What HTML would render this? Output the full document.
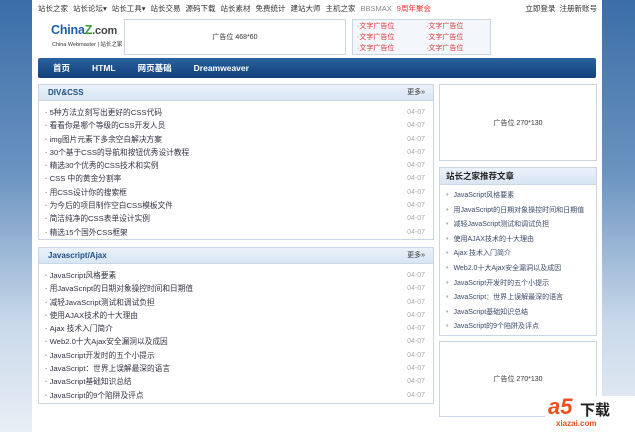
<!DOCTYPE html>
<html><head><meta charset="utf-8"><style>
*{margin:0;padding:0;box-sizing:border-box}
body{width:635px;height:432px;overflow:hidden;font-family:"Liberation Sans","Noto Sans CJK SC",sans-serif;font-size:8px;color:#333;position:relative;
background:linear-gradient(180deg,#3b6ea8 0%,#6a93c0 40%,#c9d9ea 75%,#e8eef5 100%)}
.page{position:absolute;left:32px;top:0;width:570px;height:432px;background:#fff}
.abs{position:absolute}
.top{left:38px;top:3px;font-size:7.5px;color:#333;white-space:nowrap}
.top span{margin-right:5px}
.box{border:1px solid #c9d6e3;background:#fff}
.nav{left:38px;top:58px;width:558px;height:20px;background:linear-gradient(#2a62a0,#123f78);border-radius:2px;color:#fff;font-weight:bold;font-size:8.5px;line-height:20px;padding-left:15px}
.nav span{margin-right:22px}
.hd{height:16px;background:linear-gradient(#eaf1fa,#d8e5f3);border-bottom:1px solid #c9d6e3;font-weight:bold;color:#1f4f86;font-size:8px;line-height:16px;padding-left:9px;position:relative}
.hd i{position:absolute;right:8px;font-style:normal;font-weight:normal;color:#333;font-size:7px}
ul{list-style:none;padding:5px 8px 0 6px}
li{height:13.3px;line-height:13.3px;font-size:7.7px;color:#334;position:relative;white-space:nowrap}
li:before{content:"·";color:#888;margin-right:2px;font-weight:bold}
li b{position:absolute;right:0;font-weight:normal;color:#aaa;font-size:7px}
.r li{height:14.6px;line-height:14.6px;font-size:7px;color:#3a4a6a}
.r li:before{content:"•";color:#aab;margin-right:5px}
.ad{font-size:7px;color:#333;text-align:center}
.red{color:#d33;font-size:7px;line-height:11px}
</style></head><body>
<div class="page"></div>
<div class="abs top"><span>站长之家</span><span>站长论坛▾</span><span>站长工具▾</span><span>站长交易</span><span>源码下载</span><span>站长素材</span><span>免费统计</span><span>建站大师</span><span>主机之家</span><span style="color:#888">BBSMAX</span><span style="color:#e33">9周年聚会</span></div>
<div class="abs top" style="left:auto;right:38px">立即登录&nbsp; 注册新账号</div>
<div class="abs" style="left:51px;top:23px;font-weight:bold;font-size:12.5px;color:#1d5fa6;letter-spacing:-.2px;white-space:nowrap">China<span style="color:#3a9a2a">Z</span><span style="color:#444;font-size:11px">.com</span></div>
<div class="abs" style="left:52px;top:40px;font-size:5.5px;color:#333;white-space:nowrap">China Webmaster | 站长之家</div>
<div class="abs box ad" style="left:124px;top:19px;width:222px;height:36px;line-height:36px">广告位 468*60</div>
<div class="abs box" style="left:352px;top:19px;width:139px;height:36px;background:#f3f7fc;padding:1px 0 0 3px">
<div class="abs red" style="left:4px;top:1px">·文字广告位<br>·文字广告位<br>·文字广告位</div>
<div class="abs red" style="left:73px;top:1px">·文字广告位<br>·文字广告位<br>·文字广告位</div></div>
<div class="abs nav"><span>首页</span><span>HTML</span><span>网页基础</span><span>Dreamweaver</span></div>
<div class="abs box" style="left:38px;top:84px;width:396px;height:156px">
<div class="hd">DIV&amp;CSS<i>更多»</i></div>
<ul><li>5种方法立刻写出更好的CSS代码<b>04-07</b></li><li>看看你是哪个等级的CSS开发人员<b>04-07</b></li><li>img图片元素下多余空白解决方案<b>04-07</b></li><li>30个基于CSS的导航和按钮优秀设计教程<b>04-07</b></li><li>精选30个优秀的CSS技术和实例<b>04-07</b></li><li>CSS 中的黄金分割率<b>04-07</b></li><li>用CSS设计你的搜索框<b>04-07</b></li><li>为今后的项目制作空白CSS模板文件<b>04-07</b></li><li>简洁纯净的CSS表单设计实例<b>04-07</b></li><li>精选15个国外CSS框架<b>04-07</b></li></ul></div>
<div class="abs box" style="left:38px;top:247px;width:396px;height:157px">
<div class="hd">Javascript/Ajax<i>更多»</i></div>
<ul><li>JavaScript风格要素<b>04-07</b></li><li>用JavaScript的日期对象操控时间和日期值<b>04-07</b></li><li>减轻JavaScript测试和调试负担<b>04-07</b></li><li>使用AJAX技术的十大理由<b>04-07</b></li><li>Ajax 技术入门简介<b>04-07</b></li><li>Web2.0十大Ajax安全漏洞以及成因<b>04-07</b></li><li>JavaScript开发时的五个小提示<b>04-07</b></li><li>JavaScript：世界上误解最深的语言<b>04-07</b></li><li>JavaScript基础知识总结<b>04-07</b></li><li>JavaScript的9个陷阱及评点<b>04-07</b></li></ul></div>
<div class="abs box ad" style="left:439px;top:84px;width:158px;height:77px;line-height:77px">广告位 270*130</div>
<div class="abs box r" style="left:439px;top:167px;width:158px;height:169px">
<div class="hd" style="color:#222;font-size:8.5px;height:17px;line-height:17px;padding-left:6px">站长之家推荐文章</div>
<ul style="padding:4px 4px 0 6px"><li>JavaScript风格要素</li><li>用JavaScript的日期对象操控时间和日期值</li><li>减轻JavaScript测试和调试负担</li><li>使用AJAX技术的十大理由</li><li>Ajax 技术入门简介</li><li>Web2.0十大Ajax安全漏洞以及成因</li><li>JavaScript开发时的五个小提示</li><li>JavaScript：世界上误解最深的语言</li><li>JavaScript基础知识总结</li><li>JavaScript的9个陷阱及评点</li></ul></div>
<div class="abs box ad" style="left:439px;top:341px;width:158px;height:76px;line-height:76px">广告位 270*130</div>
<div class="abs" style="left:545px;top:396px;width:90px;height:36px;background:#fff"></div>
<div class="abs" style="left:548px;top:394px;font-size:22px;font-weight:bold;color:#e8501e;font-style:italic">a5</div>
<div class="abs" style="left:580px;top:399px;font-size:15px;color:#222;font-weight:bold">下载</div>
<div class="abs" style="left:556px;top:419px;font-size:8px;color:#e8501e;font-weight:bold">xiazai.com</div>
</body></html>
